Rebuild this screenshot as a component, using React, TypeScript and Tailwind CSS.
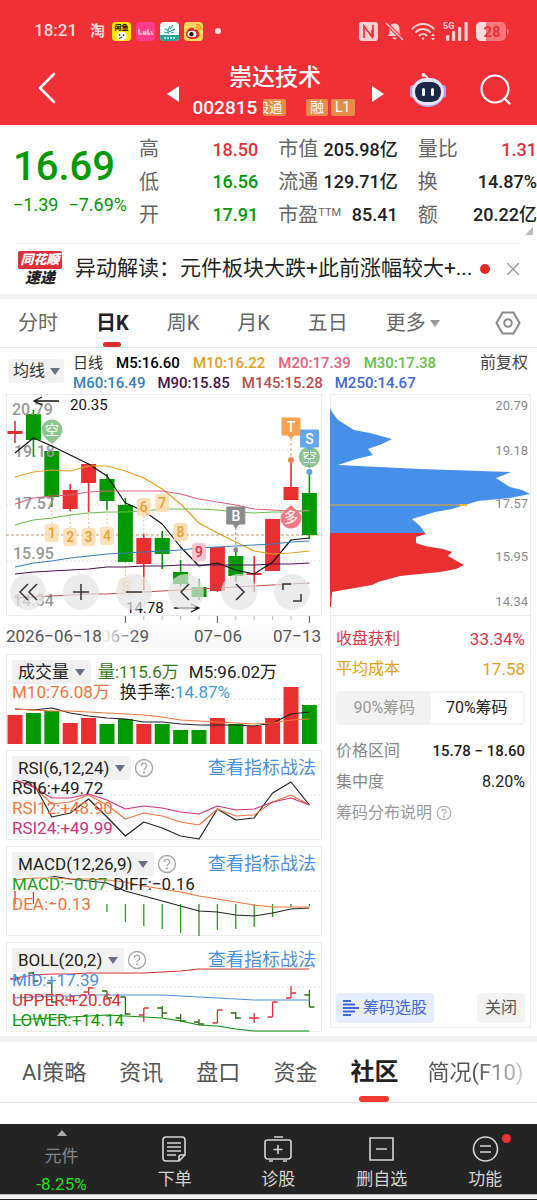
import type { ReactNode } from 'react';

const RED = '#e83030';
const GREEN = '#009900';
const STEP = 18.4;
const px = (i: number) => 9 + STEP * i;

// up, wick top, body top, body bottom, wick bottom
const candles: [boolean, number, number, number, number][] = [
  [true, 27, 37, 40, 49],
  [false, 16, 20, 46, 63],
  [false, 57, 57, 103, 113],
  [true, 90, 96, 115, 117],
  [true, 70, 70, 89, 118],
  [false, 80, 85, 107, 116],
  [false, 104, 111, 168, 168],
  [true, 140, 144, 170, 196],
  [false, 137, 144, 160, 175],
  [false, 166, 178, 190, 193],
  [false, 185, 193, 203, 206],
  [true, 153, 153, 197, 198],
  [false, 153, 162, 182, 188],
  [true, 162, 179, 181, 198],
  [true, 125, 125, 177, 177],
  [true, 66, 93, 106, 106],
  [false, 79, 99, 141, 145],
];

const averages = [
  { color: '#111111', points: [59, 44, 52, 61, 70, 82, 109, 117, 130, 153, 172, 169, 176, 180, 168, 146, 144] },
  { color: '#e3a01b', points: [83, 78, 76, 77, 72, 72, 77, 84, 95, 110, 129, 139, 148, 157, 160, 159, 157] },
  { color: '#e2627c', points: [110, 104, 102, 101, 98, 97, 97, 97, 97, 100, 105, 108, 111, 115, 116, 117, 117] },
  { color: '#6abf4b', points: [131, 126, 124, 121, 119, 118, 118, 117, 115, 115, 115, 116, 118, 119, 118, 118, 116] },
  { color: '#3a80b8', points: [173, 169, 167, 164, 162, 160, 159, 158, 157, 156, 154, 153, 152, 151, 150, 148, 147] },
  { color: '#4c1152', points: [180, 178, 177, 176, 175, 173, 173, 172, 172, 171, 171, 171, 171, 171, 170, 170, 169] },
  { color: '#b5504a', points: [204, 203, 202, 201, 200, 200, 199, 198, 197, 196, 195, 194, 193, 192, 191, 190, 189] },
];

const volumes = [61, 59, 57, 69, 64, 70, 65, 70, 70, 76, 76, 64, 70, 72, 64, 33, 51];

const macdBars: [number, number][] = [
  [45, 58], [46, 58], [56, 58], [58, 58], [57, 61], [58, 66], [58, 76], [58, 80], [58, 83],
  [58, 87], [58, 90], [58, 84], [58, 83], [58, 81], [58, 71], [58, 61], [58, 60],
];

// up, high, low, open, close
const bollBars: [boolean, number, number, number, number][] = [
  [true, 34, 39, 37, 37],
  [false, 30, 42, 31, 39],
  [false, 41, 61, 41, 60],
  [true, 52, 60, 58, 54],
  [true, 45, 53, 50, 46],
  [false, 49, 56, 49, 56],
  [false, 55, 73, 55, 72],
  [true, 66, 80, 73, 66],
  [false, 64, 76, 66, 71],
  [false, 72, 80, 76, 79],
  [false, 77, 83, 80, 82],
  [true, 68, 81, 81, 68],
  [false, 70, 77, 71, 76],
  [true, 71, 81, 76, 76],
  [true, 60, 75, 75, 60],
  [true, 44, 56, 56, 51],
  [false, 48, 65, 53, 65],
];

function Line({ points, color, width = 1.2 }: { points: number[]; color: string; width?: number }) {
  return (
    <polyline
      fill="none"
      stroke={color}
      strokeWidth={width}
      strokeLinejoin="round"
      points={points.map((y, i) => `${px(i)},${y}`).join(' ')}
    />
  );
}

function Grid({ y }: { y: number }) {
  return <line x1="0" x2="316" y1={y} y2={y} stroke="#eadfe2" strokeDasharray="2 2" />;
}

function Caret({ className = 'text-gray-500' }: { className?: string }) {
  return (
    <svg className={`h-[7px] w-[10px] ${className}`} viewBox="0 0 10 7" fill="currentColor" aria-hidden="true">
      <path d="M0 0h10L5 7z" />
    </svg>
  );
}

function Help({ className = 'size-5' }: { className?: string }) {
  return (
    <svg className={`text-[#a5a5a5] ${className}`} viewBox="0 0 20 20" fill="none" stroke="currentColor" strokeWidth="1.3" aria-hidden="true">
      <circle cx="10" cy="10" r="8.5" />
      <path d="M7.4 8a2.6 2.6 0 1 1 3.9 2.2c-.9.5-1.3.9-1.3 1.8" />
      <circle cx="10" cy="14.3" r=".5" fill="currentColor" />
    </svg>
  );
}

function StatusBar() {
  return (
    <div className="flex h-[62px] items-center pr-7 pl-[34px] text-[#ffdcdc]">
      <span className="w-[56px] text-[17px] font-medium">18:21</span>
      <span className="w-[22px] text-[15px] leading-5 font-bold">淘</span>
      <div className="flex gap-[5px]">
        <svg className="size-[19px]" viewBox="0 0 19 19" aria-hidden="true">
          <rect width="19" height="19" rx="4" fill="#ffe600" />
          <text x="9.500" y="7.500" fontSize="7" fontWeight="900" textAnchor="middle" fill="#222">闲鱼</text>
          <path d="M5 17c-1-5 1-7 4-7 4 0 7 2 5 6-2 3-7 3-9 1z" fill="#fff" />
          <circle cx="7.500" cy="13" r=".8" />
          <circle cx="11.500" cy="13" r=".8" />
          <path d="M7 16.500l3-1" stroke="#222" />
        </svg>
        <svg className="size-[19px]" viewBox="0 0 19 19" aria-hidden="true">
          <rect width="19" height="19" rx="4" fill="#ff3d8b" />
          <path d="M3 7v5h3M7.500 9v3h2V9M12 7v5h2M15.500 9v3h1.500" fill="none" stroke="#ffc4dc" strokeWidth="1.600" />
        </svg>
        <svg className="size-[19px]" viewBox="0 0 19 19" aria-hidden="true">
          <rect width="19" height="19" rx="4" fill="#fff" />
          <path d="M0 13h19v2a4 4 0 0 1-4 4H4a4 4 0 0 1-4-4z" fill="#25a899" />
          <path d="M9 12c-2-2-1-5 1-8M9 9L5 7M9 10l6-3M10 7l3-4M8 11l-4-1M11 11l3-1" stroke="#25a899" strokeWidth="1.200" fill="none" />
          <path d="M4 16h11" stroke="#d5f2ee" strokeWidth="1.500" strokeDasharray="2 1" />
        </svg>
        <svg className="size-[19px]" viewBox="0 0 19 19" aria-hidden="true">
          <rect width="19" height="19" rx="4" fill="#ffd65c" />
          <path d="M2 12c0-3 4-7 7-6 1 0 1 1 1 2 3-1 5 0 4 2 3 1 2 7-5 7-4 0-7-2-7-5z" fill="#d9232e" />
          <ellipse cx="8" cy="12" rx="4.500" ry="3.200" fill="#fff" />
          <circle cx="7.500" cy="12.200" r="2.200" fill="#111" />
          <path d="M12 5c2-.5 3.500 1 3 3M12 2.500c3-.5 5.500 2 5 5" fill="none" stroke="#f08a1c" strokeWidth="1.200" />
        </svg>
      </div>
      <span className="ml-3 size-[6px] rounded-full bg-[#ffdcdc]" />
      <div className="ml-auto flex items-center gap-[7px]">
        <svg className="size-[19px]" viewBox="0 0 19 19" fill="none" aria-hidden="true">
          <rect width="19" height="19" rx="3" fill="#ffcfd0" />
          <path d="M5 16V4l8 11V8M14 3v12M5 4v12" stroke="#f12f37" strokeWidth="1.700" />
        </svg>
        <svg className="size-[19px]" viewBox="0 0 19 19" aria-hidden="true">
          <path d="M9.500 1.500c-3.500 0-5 2.500-5 5.500v4L3 14h13l-1.500-3V7c0-3-1.500-5.500-5-5.500zM7.500 15.500a2 2 0 0 0 4 0z" fill="#ffcfd0" />
          <path d="M1 1l17 17" stroke="#f12f37" strokeWidth="3.500" />
          <path d="M1 1l17 17" stroke="#ffcfd0" strokeWidth="1.500" />
        </svg>
        <svg className="h-[19px] w-[25px]" viewBox="0 0 25 19" fill="none" stroke="#ffcfd0" strokeWidth="2" strokeLinecap="round" aria-hidden="true">
          <path d="M1.500 6.500c6-6 15-6 21 0M5 10c4-4 10-4 14 0M8.500 13.500c2-2 5-2 7 0" />
          <circle cx="12" cy="16.500" r="1.200" fill="#ffcfd0" stroke="none" />
          <path d="M20 14l2-2.500 2 2.500zM20 16l2 2.500 2-2.500z" fill="#ffcfd0" stroke="none" />
        </svg>
        <svg className="h-[19px] w-[26px]" viewBox="0 0 26 19" fill="#ffcfd0" aria-hidden="true">
          <text x="0" y="7" fontSize="9" fontWeight="700">5G</text>
          <rect x="3" y="13" width="3.200" height="6" rx="1" />
          <rect x="9" y="9" width="3.200" height="10" rx="1" />
          <rect x="15" y="5" width="3.200" height="14" rx="1" />
          <rect x="21.500" y="0" width="3.200" height="19" rx="1" />
        </svg>
        <svg className="h-[19px] w-[33px]" viewBox="0 0 33 19" aria-hidden="true">
          <rect x="0" y="0" width="30" height="19" rx="5" fill="#ff777b" />
          <path d="M5 0h5v19H5a5 5 0 0 1-5-5V5a5 5 0 0 1 5-5z" fill="#ffdcdc" />
          <path d="M31 6q2 1 2 3.500T31 13z" fill="#ff777b" />
          <text x="16" y="15" fontSize="15" fontWeight="600" textAnchor="middle" fill="#ee2f38">28</text>
        </svg>
      </div>
    </div>
  );
}

function TitleBar() {
  return (
    <div className="flex h-[63px] items-center justify-between pr-[26px] pl-9 text-white">
      <button aria-label="返回" className="mr-[84px] mb-3">
        <svg className="h-8 w-5" viewBox="0 0 20 32" fill="none" stroke="currentColor" strokeWidth="2.600" strokeLinecap="round" strokeLinejoin="round">
          <path d="M18 2L4 16l14 14" />
        </svg>
      </button>
      <div className="flex items-center gap-[14px]">
        <button aria-label="上一只">
          <svg className="h-4 w-3" viewBox="0 0 12 16" fill="currentColor"><path d="M12 0v16L0 8z" /></svg>
        </button>
        <div className="flex w-[165px] flex-col items-center gap-1 pb-1">
          <h1 className="text-[23px] leading-7 font-medium">崇达技术</h1>
          <div className="flex w-full items-center pr-[3px] text-[19px] leading-6 font-medium">
            <span className="mr-[6px]">002815</span>
            <span className="flex h-[17px] w-[23px] justify-end overflow-hidden rounded-xs bg-[#e58c49] pr-1 text-[13px] leading-[17px] font-normal whitespace-nowrap">股通</span>
            <span className="ml-auto h-[17px] rounded-xs bg-[#e58c49] px-1 text-[14px] leading-[17px] font-normal">融</span>
            <span className="ml-[3px] h-[17px] rounded-xs bg-[#e58c49] px-1 text-[14px] leading-[17px] font-normal">L1</span>
          </div>
        </div>
        <button aria-label="下一只">
          <svg className="h-4 w-3" viewBox="0 0 12 16" fill="currentColor"><path d="M0 0v16l12-8z" /></svg>
        </button>
      </div>
      <div className="mb-2 flex items-center gap-[34px]">
        <button aria-label="智能助手">
          <svg className="h-9 w-9" viewBox="0 0 36 36" fill="none">
            <path d="M18 8c0-3-1-4-4-5" stroke="#fff" strokeWidth="1.600" />
            <circle cx="13.500" cy="3" r="2" fill="#ffd9dc" />
            <rect x="0" y="13" width="6" height="13" rx="3" fill="#a9a3e8" />
            <rect x="30" y="13" width="6" height="13" rx="3" fill="#a9a3e8" />
            <rect x="2" y="6" width="32" height="28" rx="14" fill="#e6e4fb" />
            <path d="M6 29c6 6 18 6 24 0-2 4-7 6-12 6s-10-2-12-6z" fill="#a9a3e8" />
            <rect x="5" y="10" width="26" height="20" rx="9.500" fill="#1c2748" />
            <rect x="12" y="16" width="3" height="8" rx="1.500" fill="#fff" />
            <rect x="21" y="16" width="3" height="8" rx="1.500" fill="#fff" />
          </svg>
        </button>
        <button aria-label="搜索">
          <svg className="size-[31px]" viewBox="0 0 31 31" fill="none" stroke="currentColor" strokeWidth="2.200" strokeLinecap="round">
            <circle cx="15" cy="15" r="13.500" />
            <path d="M24.500 24.500l5 5" />
          </svg>
        </button>
      </div>
    </div>
  );
}

function Stat({ label, value, color = 'text-[#222]' }: { label: ReactNode; value: string; color?: string }) {
  return (
    <div className="flex items-center justify-between whitespace-nowrap">
      <dt className="text-[20px] text-[#666]">{label}</dt>
      <dd className={`text-[18px] font-medium ${color}`}>{value}</dd>
    </div>
  );
}

function Quote() {
  return (
    <section className="relative flex h-[118px] pt-2">
      <div className="w-[139px] pt-3 pl-[13px] text-[#009900]">
        <div className="text-[40px] leading-[44px] font-medium">16.69</div>
        <div className="mt-1 flex gap-[10px] text-[18px] leading-6 whitespace-nowrap">
          <span>−1.39</span>
          <span>−7.69%</span>
        </div>
      </div>
      <dl className="grid h-[98px] flex-1 grid-cols-3 gap-x-5">
        <Stat label="高" value="18.50" color="text-[#e03038]" />
        <Stat label="市值" value="205.98亿" />
        <Stat label="量比" value="1.31" color="text-[#e03038]" />
        <Stat label="低" value="16.56" color="text-[#009900]" />
        <Stat label="流通" value="129.71亿" />
        <Stat label="换" value="14.87%" />
        <Stat label="开" value="17.91" color="text-[#009900]" />
        <Stat label={<>市盈<sup className="text-[11px]">TTM</sup></>} value="85.41" />
        <Stat label="额" value="20.22亿" />
      </dl>
      <svg className="absolute right-1 bottom-2 size-2" viewBox="0 0 8 8" fill="#bbb" aria-hidden="true"><path d="M8 0v8H0z" /></svg>
    </section>
  );
}

function News() {
  return (
    <section className="mx-4 flex h-[51px] items-center border-t border-[#ededed]">
      <div className="ml-[2px] w-[44px] text-center text-[13px] leading-[18px] font-black italic">
        <div className="rounded-xs bg-[#dc3038] whitespace-nowrap text-white">同花顺</div>
        <div className="text-[15px] text-[#222]">速递</div>
      </div>
      <a href="#news" className="ml-[13px] flex-1 text-[21px] whitespace-nowrap text-[#222]">异动解读：元件板块大跌+此前涨幅较大+...</a>
      <span className="mr-[17px] ml-1 size-[10px] shrink-0 rounded-full bg-[#e32a2a]" />
      <button aria-label="关闭提示" className="mr-[2px] text-[#999]">
        <svg className="size-3" viewBox="0 0 12 12" stroke="currentColor" strokeWidth="1.300"><path d="M0 0l12 12M12 0L0 12" /></svg>
      </button>
    </section>
  );
}

const periods = ['分时', '日K', '周K', '月K', '五日'];

function PeriodTabs() {
  return (
    <nav className="flex h-[49px] items-stretch gap-[38px] border-b border-[#e8e8e8] pr-4 pl-[18px] text-[20px] whitespace-nowrap text-[#666]">
      {periods.map((name) =>
        name === '日K' ? (
          <button key={name} className="grid font-bold text-[#222]">
            <span className="self-center [grid-area:1/1]">{name}</span>
            <span className="h-[5px] w-[18px] self-end justify-self-center rounded-full bg-[#d9302f] [grid-area:1/1]" />
          </button>
        ) : (
          <button key={name}>{name}</button>
        ),
      )}
      <button className="flex items-center gap-1">更多<Caret className="text-[#999]" /></button>
      <button aria-label="设置" className="ml-auto text-[#8a8a8a]">
        <svg className="h-6 w-[26px]" viewBox="0 0 26 24" fill="none" stroke="currentColor" strokeWidth="2" strokeLinejoin="round">
          <path d="M7.500 1.500h11L24.500 12l-6 10.500h-11L1.500 12z" />
          <circle cx="13" cy="12" r="3.800" />
        </svg>
      </button>
    </nav>
  );
}

function AverageLegend() {
  return (
    <div className="flex h-[46px] items-start pt-[5px] pr-[9px] pl-[9px] text-[15px] leading-5 font-medium whitespace-nowrap">
      <button className="mt-[6px] mr-[9px] flex h-6 items-center gap-[5px] rounded-xs bg-[#f2f2f2] px-1 text-[16px] font-normal text-[#333]">
        均线<Caret />
      </button>
      <div className="flex-1">
        <div className="flex gap-[13px]">
          <span className="font-normal text-[#333]">日线</span>
          <span className="text-black">M5:16.60</span>
          <span className="text-[#e3a01b]">M10:16.22</span>
          <span className="text-[#e2627c]">M20:17.39</span>
          <span className="text-[#6abf4b]">M30:17.38</span>
        </div>
        <div className="flex gap-3">
          <span className="text-[#3a80b8]">M60:16.49</span>
          <span className="text-[#4c1152]">M90:15.85</span>
          <span className="text-[#b5504a]">M145:15.28</span>
          <span className="text-[#4468d8]">M250:14.67</span>
        </div>
      </div>
      <span className="text-[16px] font-normal text-[#444]">前复权</span>
    </div>
  );
}

function NumberTag({ i, y, n, hot, faded }: { i: number; y: number; n: number; hot?: boolean; faded?: boolean }) {
  return (
    <g opacity={faded ? 0.6 : 1}>
      <rect x={px(i) - 7} y={y - 9} width="14" height="18" rx="3" fill={hot ? '#f9bcc4' : '#fddcae'} opacity=".85" />
      <text x={px(i)} y={y + 5} fontSize="14" fontWeight="500" textAnchor="middle" fill={hot ? '#e8303c' : '#f0a030'}>{n}</text>
    </g>
  );
}

function LetterTag({ i, y, letter, color }: { i: number; y: number; letter: string; color: string }) {
  return (
    <g>
      <path d={`M${px(i) - 9} ${y - 9}h18v17h-6l-3 4l-3-4h-6z`} fill={color} stroke={color} strokeLinejoin="round" />
      <text x={px(i)} y={y + 5} fontSize="14" fontWeight="500" textAnchor="middle" fill="#fff">{letter}</text>
    </g>
  );
}

function KLine() {
  return (
    <svg className="block w-full [grid-area:1/1]" viewBox="0 0 316 222" role="img" aria-label="日K线">
      {[56, 111, 167].map((y) => <Grid key={y} y={y} />)}
      <line x1="0" x2="316" y1="141" y2="141" stroke="#c09a6b" strokeDasharray="3 2" />
      <g stroke="#f6c27e" strokeDasharray="2 2">
        {[2, 3, 4, 5].map((i) => <line key={i} x1={px(i)} x2={px(i)} y1="116" y2="136" />)}
        <line x1={px(6)} x2={px(6)} y1="168" y2="186" />
        <line x1={px(7)} x2={px(7)} y1="118" y2="140" />
        <line x1={px(9)} x2={px(9)} y1="146" y2="166" />
      </g>
      {candles.map(([up, top, open, close, low], i) => (
        <g key={i} fill={up ? RED : GREEN} stroke={up ? RED : GREEN}>
          <line x1={px(i)} x2={px(i)} y1={top} y2={low} strokeWidth="1.600" />
          <rect x={px(i) - 7.5} y={open} width="15" height={close - open} stroke="none" />
        </g>
      ))}
      <g fontSize="16" fontWeight="500" fill="#999">
        <text x="6" y="21">20.79</text>
        <text x="8" y="63">19.18</text>
        <text x="8" y="115">17.57</text>
        <text x="7" y="165">15.95</text>
        <text x="7" y="212">14.34</text>
      </g>
      {averages.map((a) => <Line key={a.color} points={a.points} color={a.color} />)}

      <g fill="#7fc082" fillOpacity=".9">
        <path d="M35.500 36a10.500 10.500 0 1 1 21 0c0 5-5 9-10.500 14-5.500-5-10.500-9-10.500-14z" />
        <circle cx={px(16)} cy="63" r="10.500" />
      </g>
      <path d={`M${px(15) - 10.5} 124a10.500 10.500 0 1 0 21 0c0-5-5-7-10.500-13-5.500 6-10.500 8-10.500 13z`} fill="#f37c84" />
      <g fontSize="14" textAnchor="middle" fill="#fff">
        <text x="46" y="41">空</text>
        <text x={px(16)} y="68">空</text>
        <text x={px(15)} y="128">多</text>
      </g>

      <NumberTag i={2} y={139} n={1} />
      <NumberTag i={3} y={143} n={2} />
      <NumberTag i={4} y={143} n={3} />
      <NumberTag i={5} y={142} n={4} />
      <NumberTag i={6} y={193} n={5} faded />
      <NumberTag i={7} y={113} n={6} />
      <NumberTag i={8} y={109} n={7} />
      <NumberTag i={9} y={138} n={8} />
      <NumberTag i={10} y={158} n={9} hot />

      <line x1={px(15)} x2={px(15)} y1="44" y2="66" stroke="#f59a4d" strokeDasharray="3 2" />
      <circle cx={px(15)} cy="66" r="3" fill="#f5824d" />
      <line x1={px(16)} x2={px(16)} y1="56" y2="78" stroke="#5b9fe8" strokeDasharray="3 2" />
      <circle cx={px(16)} cy="78" r="3" fill="#5b9fe8" />
      <line x1={px(12)} x2={px(12)} y1="133" y2="156" stroke="#888" strokeDasharray="3 2" />
      <circle cx={px(12)} cy="156" r="2.500" fill="#888" />
      <LetterTag i={15} y={33} letter="T" color="#f9a052" />
      <LetterTag i={16} y={45} letter="S" color="#65a7ef" />
      <LetterTag i={12} y={122} letter="B" color="#8b8b8b" />

      <g fontSize="15" fill="#111">
        <text x="64" y="16">20.35</text>
        <text x="120" y="219">14.78</text>
      </g>
      <g fill="none" stroke="#111" strokeWidth="1.300">
        <path d="M53 7H28M36 3l-8 4 8 4" />
        <path d="M168 214h25M185 210l8 4-8 4" />
      </g>
    </svg>
  );
}

const tools = [
  { name: '快退', d: 'M11 3L3 11l8 8M20 3l-8 8 8 8' },
  { name: '放大', d: 'M11 3v16M3 11h16' },
  { name: '缩小', d: 'M3 11h16' },
  { name: '左移', d: 'M14 3l-8 8 8 8' },
  { name: '右移', d: 'M8 3l8 8-8 8' },
  { name: '全屏', d: 'M2 9V3h8M20 13v7h-8' },
];

function TimeAxis() {
  return (
    <svg className="block w-full" viewBox="0 0 316 32" role="img" aria-label="日期">
      <defs>
        <linearGradient id="axisFade" x1="0" x2="1" y1="0" y2="0">
          <stop offset="0" stopColor="#fff" />
          <stop offset="1" stopColor="#fff" stopOpacity="0" />
        </linearGradient>
        <linearGradient id="axisBg" x1="0" x2="0" y1="0" y2="1">
          <stop offset="0" stopColor="#fff" />
          <stop offset="1" stopColor="#f7f7f7" />
        </linearGradient>
      </defs>
      <rect width="316" height="32" fill="url(#axisBg)" />
      {candles.slice(6).map((_, n) => {
        const i = n + 6;
        const major = i === 6 || i === 11 || i === 16;
        return <line key={i} x1={px(i)} x2={px(i)} y1="0" y2={major ? 7 : 4} stroke={major ? '#555' : '#bbb'} />;
      })}
      <g fontSize="17" fill="#555">
        <text x="119" y="26" textAnchor="middle">06−29</text>
        <text x="212" y="26" textAnchor="middle">07−06</text>
        <text x="315" y="26" textAnchor="end">07−13</text>
        <rect x="94" y="8" width="38" height="24" fill="url(#axisFade)" />
        <text x="0" y="26">2026−06−18</text>
      </g>
    </svg>
  );
}

function IndicatorHead({ name }: { name: string }) {
  return (
    <div className="flex items-center">
      <button className="flex h-6 items-center gap-[6px] rounded-xs bg-[#f1f1f1] px-[6px] text-[#222]">{name}<Caret /></button>
      <Help className="ml-[3px] size-5" />
      <a href="#guide" className="ml-auto text-[18px] text-[#4a8fe0]">查看指标战法</a>
    </div>
  );
}

function Panel({ chart, children }: { chart: ReactNode; children: ReactNode }) {
  return (
    <section className="grid ring-1 ring-[#ebebeb] ring-inset">
      <svg className="block w-full [grid-area:1/1]" viewBox="0 0 316 90" aria-hidden="true">{chart}</svg>
      <div className="relative px-[6px] pt-[6px] text-[17px] leading-5 whitespace-nowrap [grid-area:1/1]">{children}</div>
    </section>
  );
}

function Indicators() {
  return (
    <div className="mt-[6px] flex flex-col gap-[6px]">
      <Panel
        chart={
          <>
            <Grid y={45} />
            {volumes.map((y, i) => (
              <rect key={i} x={px(i) - 7.5} y={y} width="15" height={90 - y} fill={candles[i][0] ? RED : GREEN} />
            ))}
            <Line color="#222" points={[55, 56, 54, 59, 62, 64, 65, 68, 68, 70, 71, 71, 71, 72, 69, 60, 58]} />
            <Line color="#f4743b" points={[55, 56, 57, 57, 58, 59, 60, 61, 63, 66, 67, 68, 69, 70, 69, 66, 65]} />
          </>
        }
      >
        <div className="flex items-center">
          <button className="mr-[7px] flex h-6 items-center gap-[6px] rounded-xs bg-[#f1f1f1] px-[6px] text-[#222]">成交量<Caret /></button>
          <span className="mr-[10px] text-[#3b7a1a]">量:115.6万</span>
          <span className="text-[#222]">M5:96.02万</span>
        </div>
        <div className="-mt-[2px] flex gap-[10px]">
          <span className="text-[#f4743b]">M10:76.08万</span>
          <span className="text-[#222]">换手率:<span className="text-[#3f9be0]">14.87%</span></span>
        </div>
      </Panel>
      <Panel
        chart={
          <>
            <Grid y={45} />
            <Line color="#222" points={[28, 33, 67, 63, 49, 67, 86, 72, 78, 86, 89, 59, 70, 68, 43, 32, 55]} />
            <Line color="#f4743b" points={[30, 36, 54, 52, 45, 55, 69, 63, 66, 72, 75, 59, 66, 65, 52, 45, 55]} />
            <Line color="#c9347c" points={[30, 37, 48, 48, 44, 50, 59, 56, 58, 62, 64, 56, 60, 59, 52, 48, 55]} />
          </>
        }
      >
        <IndicatorHead name="RSI(6,12,24)" />
        <div className="-mt-[2px] text-[#222]">RSI6:+49.72</div>
        <div className="text-[#f4743b]">RSI12:+48.90</div>
        <div className="text-[#c9347c]">RSI24:+49.99</div>
      </Panel>
      <Panel
        chart={
          <>
            <Grid y={45} />
            {macdBars.map(([from, to], i) => (
              <line key={i} x1={px(i)} x2={px(i)} y1={from} y2={to} stroke={i < 4 ? RED : '#2a9a1c'} strokeWidth="1.300" />
            ))}
            <Line color="#222" points={[27, 28, 30, 33, 35, 37, 45, 50, 55, 60, 65, 66, 69, 70, 67, 63, 62]} />
            <Line color="#f4743b" points={[34, 32, 32, 33, 33, 34, 36, 40, 43, 46, 50, 53, 56, 59, 61, 61, 61]} />
          </>
        }
      >
        <IndicatorHead name="MACD(12,26,9)" />
        <div className="-mt-[2px] flex gap-[6px]">
          <span className="text-[#2a9a1c]">MACD:−0.07</span>
          <span className="text-[#222]">DIFF:−0.16</span>
        </div>
        <div className="text-[#f4743b]">DEA:−0.13</div>
      </Panel>
      <Panel
        chart={
          <>
            <Grid y={45} />
            {bollBars.map(([up, high, low, open, close], i) => (
              <path
                key={i}
                d={`M${px(i)} ${high}V${low}M${px(i) - 5} ${open}H${px(i)}M${px(i)} ${close}h5`}
                stroke={up ? '#e03038' : '#2f6b14'}
                strokeWidth="1.300"
              />
            ))}
            <Line color="#d9302f" points={[36, 33, 32, 32, 31, 31, 31, 31, 30, 29, 27, 27, 27, 27, 27, 27, 27]} />
            <Line color="#4a8fe0" points={[56, 55, 54, 54, 53, 53, 53, 53, 53, 54, 55, 56, 57, 58, 58, 58, 58]} />
            <Line color="#0a8f0a" points={[78, 77, 76, 75, 74, 73, 74, 75, 76, 79, 83, 84, 87, 89, 89, 89, 89]} />
          </>
        }
      >
        <IndicatorHead name="BOLL(20,2)" />
        <div className="-mt-[2px] text-[#4a8fe0]">MID:+17.39</div>
        <div className="text-[#d9302f]">UPPER:+20.64</div>
        <div className="text-[#0a9a0a]">LOWER:+14.14</div>
      </Panel>
    </div>
  );
}

function ChipPanel() {
  return (
    <aside className="mb-1 flex flex-col border border-[#ebebeb] whitespace-nowrap">
      <svg className="-ml-px block border-b border-[#ebebeb]" viewBox="0 0 200 220" role="img" aria-label="筹码分布">
        <path
          fill="#4690ec"
          d="M0 13L2 17 8 25 24 35 40 38 62 44 52 49 38 54 43 60 26 64 8 70 90 74 181 77 174 80 166 83 172 87 180 92 192 95 200 99 180 103 148 106 135 110 122 114 105 117 92 121 82 124 90 131 95 138H0z"
        />
        <path
          fill={RED}
          d="M0 138H95L96 139 86 142 86 148 95 151 113 154 122 157 118 161 134 170 126 174 110 177 70 181 48 187 42 190 2 197 1 212H0z"
        />
        <path d="M0 110h129" stroke="#9c9c8c" strokeWidth="2" />
        <path d="M129 110h8" stroke="#efb13c" strokeWidth="2" />
        <g fontSize="13" fill="#8a8a8a" textAnchor="end">
          <text x="198" y="15">20.79</text>
          <text x="198" y="60">19.18</text>
          <text x="198" y="113">17.57</text>
          <text x="198" y="166">15.95</text>
          <text x="198" y="211">14.34</text>
        </g>
      </svg>
      <div className="flex flex-1 flex-col px-[5px] pt-2 text-[16px] leading-[30px]">
        <div className="flex justify-between text-[#dc3545]"><span>收盘获利</span><span className="text-[17px]">33.34%</span></div>
        <div className="flex justify-between text-[#e3a01b]"><span>平均成本</span><span className="text-[17px]">17.58</span></div>
        <div className="my-[7px] grid grid-cols-2 rounded-sm border-2 border-[#f2f2f2]">
          <button className="bg-[#f2f2f2] text-[#999]">90%筹码</button>
          <button className="text-[#222]">70%筹码</button>
        </div>
        <div className="flex justify-between pt-1 pb-px"><span className="text-[#888]">价格区间</span><span className="text-[15px] font-medium text-[#222]">15.78 − 18.60</span></div>
        <div className="flex justify-between pb-px"><span className="text-[#888]">集中度</span><span className="text-[#222]">8.20%</span></div>
        <button className="flex items-center gap-1 text-[#999]">筹码分布说明<Help className="size-4" /></button>
        <div className="mt-auto flex justify-between pb-1">
          <button className="flex items-center gap-1 rounded-sm bg-[#e6edfc] px-[7px] text-[#4468d8]">
            <svg className="size-4" viewBox="0 0 16 16" stroke="currentColor" strokeWidth="2" aria-hidden="true">
              <path d="M0 1h8M0 4.500h12M0 8h16M0 11.500h12M0 15h8" />
            </svg>
            筹码选股
          </button>
          <button className="rounded-sm bg-[#f3f3f3] px-2 text-[#555]">关闭</button>
        </div>
      </div>
    </aside>
  );
}

const sections = ['AI策略', '资讯', '盘口', '资金', '社区', '简况(F10)'];

function SectionTabs() {
  return (
    <nav className="flex h-[61px] gap-[33px] border-b border-[#e3e3e3] pl-[22px] text-[22px] whitespace-nowrap text-[#555]">
      {sections.map((name) => {
        if (name === '社区') {
          return (
            <button key={name} className="grid text-[24px] font-bold text-[#222]">
              <span className="self-center [grid-area:1/1]">{name}</span>
              <span className="h-[6px] w-[30px] self-end justify-self-center rounded-full bg-[#f03a30] [grid-area:1/1]" />
            </button>
          );
        }
        if (name.startsWith('简况')) {
          return (
            <button key={name} className="-ml-1 bg-linear-to-r from-[#555] from-50% to-[#ccc] bg-clip-text text-transparent">{name}</button>
          );
        }
        return <button key={name}>{name}</button>;
      })}
    </nav>
  );
}

const actions = [
  { name: '下单', icon: <path d="M5 2h16q3 0 3 3v15l-6 6H5q-3 0-3-3V5q0-3 3-3zM6 8h14M6 12h14M6 16h14M6 20h9M24 20h-4q-2 0-2 2v4" /> },
  { name: '诊股', icon: <path d="M9 2h9M3 5h21q2 0 2 2v14q0 3-3 3H3q-3 0-3-3V7q0-2 3-2zM13 10v9M8.500 14.500h9M4 26h4M18 26h4" /> },
  { name: '删自选', icon: <path d="M2 3h23v22H2zM8 14h11" /> },
  { name: '功能', icon: <><circle cx="13.500" cy="14" r="12" /><path d="M8 11h11M8 17h11" /></> },
];

function BottomBar() {
  return (
    <footer className="mt-[21px] bg-[#242424]">
      <div className="flex h-[70px] text-[17px] leading-6 text-[#d5d5d5]">
        <button className="flex w-[123px] flex-col items-center pt-[6px]">
          <svg className="h-[7px] w-3" viewBox="0 0 12 7" fill="#aaa" aria-hidden="true"><path d="M6 0l6 7H0z" /></svg>
          <span className="mt-2 text-[#85858f]">元件</span>
          <span className="mt-[6px] leading-5 text-[#22e022]">-8.25%</span>
        </button>
        {actions.map((a) => (
          <button key={a.name} className="flex flex-1 flex-col items-center pt-[11px]">
            <span className="relative">
              <svg className="h-7 w-[27px] overflow-visible" viewBox="0 0 27 28" fill="none" stroke="currentColor" strokeWidth="1.600" aria-hidden="true">{a.icon}</svg>
              {a.name === '功能' && <span className="absolute -top-[1px] -right-3 size-[9px] rounded-full bg-[#f03030]" />}
            </span>
            <span className="mt-1">{a.name}</span>
          </button>
        ))}
      </div>
      <div className="h-[6px] border-t border-b border-t-[#bbb] border-b-[#242424] bg-[#f4f4f4]" />
    </footer>
  );
}

export default function App() {
  return (
    <div className="w-full bg-white font-[Roboto,'Noto_Sans_CJK_SC',sans-serif]">
      <header className="bg-[#f12f37]">
        <StatusBar />
        <TitleBar />
      </header>
      <Quote />
      <News />
      <div className="h-[5px] bg-[#f2f2f2]" />
      <PeriodTabs />
      <AverageLegend />
      <main className="grid grid-cols-[316fr_201fr] gap-2 px-[6px] pb-1">
        <div>
          <section className="grid ring-1 ring-[#ebebeb] ring-inset">
            <KLine />
            <div className="relative flex justify-between self-end pr-3 pb-[6px] pl-1 [grid-area:1/1]">
              {tools.map((t) => (
                <button key={t.name} aria-label={t.name} className="grid size-9 place-items-center rounded-full bg-[#e4e4e4]/70 text-[#333]">
                  <svg className="size-[22px]" viewBox="0 0 22 22" fill="none" stroke="currentColor" strokeWidth="1.500"><path d={t.d} /></svg>
                </button>
              ))}
            </div>
          </section>
          <TimeAxis />
          <Indicators />
        </div>
        <ChipPanel />
      </main>
      <div className="h-[6px] bg-[#f2f2f2]" />
      <SectionTabs />
      <BottomBar />
    </div>
  );
}
